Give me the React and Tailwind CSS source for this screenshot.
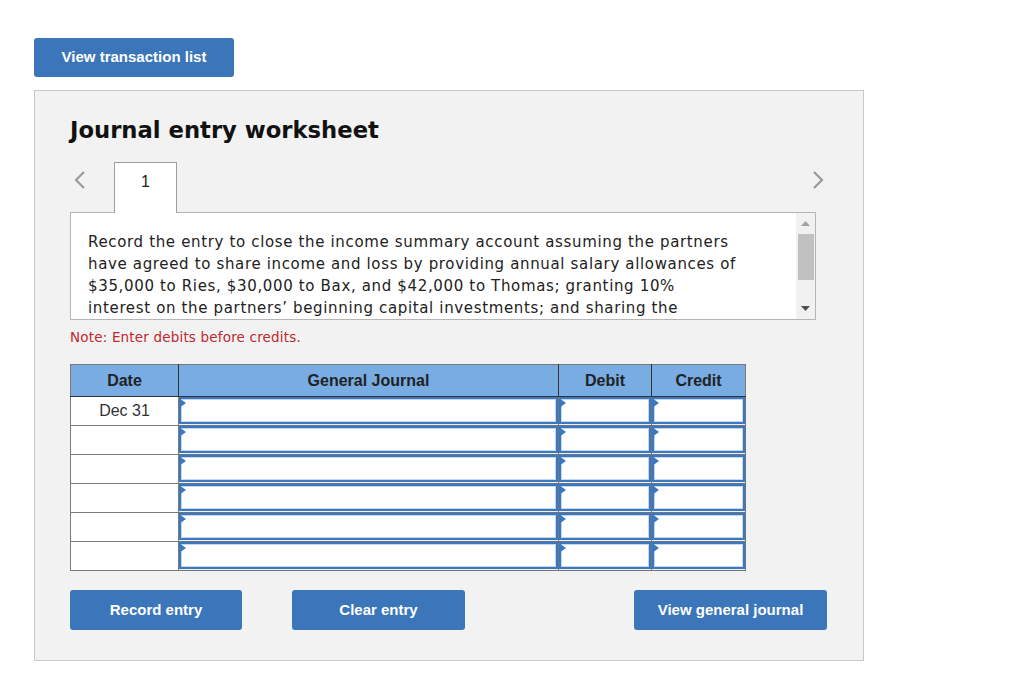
import React from "react";

const arial = { fontFamily: '"Liberation Sans", Arial, sans-serif' };
const verdana = { fontFamily: '"DejaVu Sans", Verdana, sans-serif' };

function Chevron({ dir }) {
  return (
    <svg width="14" height="20" viewBox="0 0 14 20">
      {dir === "left" ? (
        <polyline points="11,2 3,10 11,18" fill="none" stroke="#9a9a9a" strokeWidth="2.2" />
      ) : (
        <polyline points="3,2 11,10 3,18" fill="none" stroke="#9a9a9a" strokeWidth="2.2" />
      )}
    </svg>
  );
}

function InputCell({ w }) {
  return (
    <td className={`${w} border border-[#6b7682] p-0 align-top`}>
      <div className="relative h-[27px] border-2 border-[#3b78c0] bg-white shadow-[inset_0_0_0_1px_#c3d8f0]">
        <svg className="absolute left-[-2px] top-[-1px]" width="7" height="10" viewBox="0 0 7 10">
          <polygon points="0,0 7,5 0,10" fill="#3b78c0" />
        </svg>
      </div>
    </td>
  );
}

export default function App() {
  const rows = ["Dec 31", "", "", "", "", ""];
  return (
    <div className="w-[1017px] h-[695px] bg-white pt-[38px] pl-[34px]" style={arial}>
      <button className="w-[200px] h-[39px] rounded-[3px] bg-[#3a76b9] text-white text-[15px] font-bold">
        View transaction list
      </button>

      <div className="mt-[13px] w-[830px] h-[571px] border border-[#c9c9c9] bg-[#f2f2f2] pl-[35px] pt-[26px]">
        <h1 className="text-[22.7px] leading-[26px] font-bold text-[#111]" style={verdana}>
          Journal entry worksheet
        </h1>

        <div className="mt-[19px] w-[756px] flex items-start justify-between">
          <div className="flex items-start">
            <div className="w-[44px] pt-[8px] pl-[3px]">
              <Chevron dir="left" />
            </div>
            <div className="relative z-10 w-[63px] h-[51px] -mb-px border border-b-0 border-[#9e9e9e] bg-white text-center pt-[7px] text-[16px] text-[#222]">
              1
            </div>
          </div>
          <div className="pt-[8px] pr-[1px]">
            <Chevron dir="right" />
          </div>
        </div>

        <div className="w-[746px] h-[108px] border border-[#b5b5b5] bg-white flex">
          <div className="flex-1 h-full overflow-hidden pl-[17px] pr-[55px] pt-[18px] text-[15px] leading-[22px] tracking-[0.65px] text-[#222]" style={verdana}>
            Record the entry to close the income summary account assuming the partners have agreed to share income and loss by providing annual salary allowances of $35,000 to Ries, $30,000 to Bax, and $42,000 to Thomas; granting 10% interest on the partners’ beginning capital investments; and sharing the remainder equally.
          </div>
          <div className="w-[19px] h-full bg-[#f1f1f1] flex flex-col items-center">
            <svg className="mt-[8px]" width="9" height="5" viewBox="0 0 9 5">
              <polygon points="4.5,0 9,5 0,5" fill="#a3a3a3" />
            </svg>
            <div className="mt-[8px] w-[16px] h-[46px] bg-[#c1c1c1]" />
            <div className="flex-1" />
            <svg className="mb-[8px]" width="9" height="5" viewBox="0 0 9 5">
              <polygon points="0,0 9,0 4.5,5" fill="#505050" />
            </svg>
          </div>
        </div>

        <p className="mt-[7px] text-[13.5px] leading-[20px] tracking-[0.18px] text-[#c1272d]" style={verdana}>
          Note: Enter debits before credits.
        </p>

        <table className="mt-[17px] border-collapse border border-[#7a7a7a] table-fixed w-[676px]">
          <thead>
            <tr className="h-[32px] bg-[#78ace3] text-[16px] font-bold text-[#222]">
              <th className="w-[108px] border-r border-b border-[#333] font-bold">Date</th>
              <th className="w-[380px] border-r border-b border-[#333] font-bold">General Journal</th>
              <th className="w-[93px] border-r border-b border-[#333] font-bold">Debit</th>
              <th className="w-[94px] border-b border-[#333] font-bold">Credit</th>
            </tr>
          </thead>
          <tbody>
            {rows.map((d, i) => (
              <tr key={i} className="h-[29px]">
                <td className="w-[108px] border border-[#7a7a7a] bg-white text-center text-[16px] text-[#333] align-middle">
                  {d}
                </td>
                <InputCell w="w-[380px]" />
                <InputCell w="w-[93px]" />
                <InputCell w="w-[94px]" />
              </tr>
            ))}
          </tbody>
        </table>

        <div className="mt-[19px] flex text-white text-[15px] font-bold">
          <button className="w-[172px] h-[40px] rounded-[3px] bg-[#3a76b9]">Record entry</button>
          <button className="ml-[50px] w-[173px] h-[40px] rounded-[3px] bg-[#3a76b9]">Clear entry</button>
          <button className="ml-[169px] w-[193px] h-[40px] rounded-[3px] bg-[#3a76b9]">View general journal</button>
        </div>
      </div>
    </div>
  );
}
